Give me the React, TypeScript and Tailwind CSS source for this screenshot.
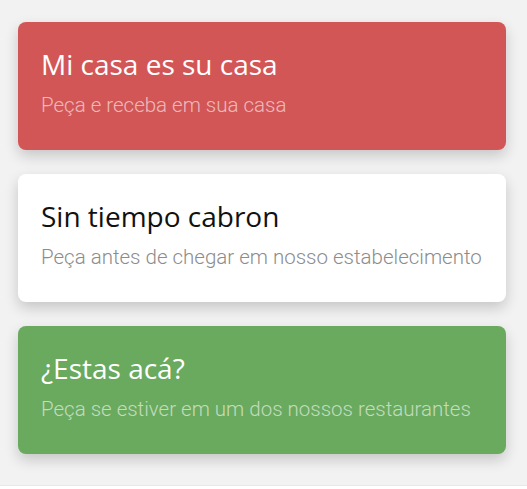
const options = [
  {
    title: "Mi casa es su casa",
    subtitle: "Peça e receba em sua casa",
    card: "bg-[#d35656]",
    titleColor: "text-white",
    subColor: "text-white/60",
  },
  {
    title: "Sin tiempo cabron",
    subtitle: "Peça antes de chegar em nosso estabelecimento",
    card: "bg-white",
    titleColor: "text-[#111111]",
    subColor: "text-[#8c8c8c]",
  },
  {
    title: "¿Estas acá?",
    subtitle: "Peça se estiver em um dos nossos restaurantes",
    card: "bg-[#6aaa5e]",
    titleColor: "text-white",
    subColor: "text-white/60",
  },
];

export default function App() {
  return (
    <div className="w-[527px] h-[486px] bg-[#f2f2f2] overflow-hidden border-b border-[#e8e8e8]">
      <div className="flex flex-col gap-[24px] px-[18px] pt-[22px] pr-[21px]">
        {options.map((o) => (
          <div
            key={o.title}
            className={`${o.card} h-[128px] rounded-[8px] pl-[23px] pt-[23px] shadow-[0_6px_14px_rgba(0,0,0,0.18)]`}
          >
            <div
              className={`${o.titleColor} text-[28px] leading-[38px] font-[Open_Sans,sans-serif]`}
            >
              {o.title}
            </div>
            <div
              className={`${o.subColor} mt-[8px] text-[20.5px] leading-[28px] font-light font-[Roboto,sans-serif]`}
            >
              {o.subtitle}
            </div>
          </div>
        ))}
      </div>
    </div>
  );
}
